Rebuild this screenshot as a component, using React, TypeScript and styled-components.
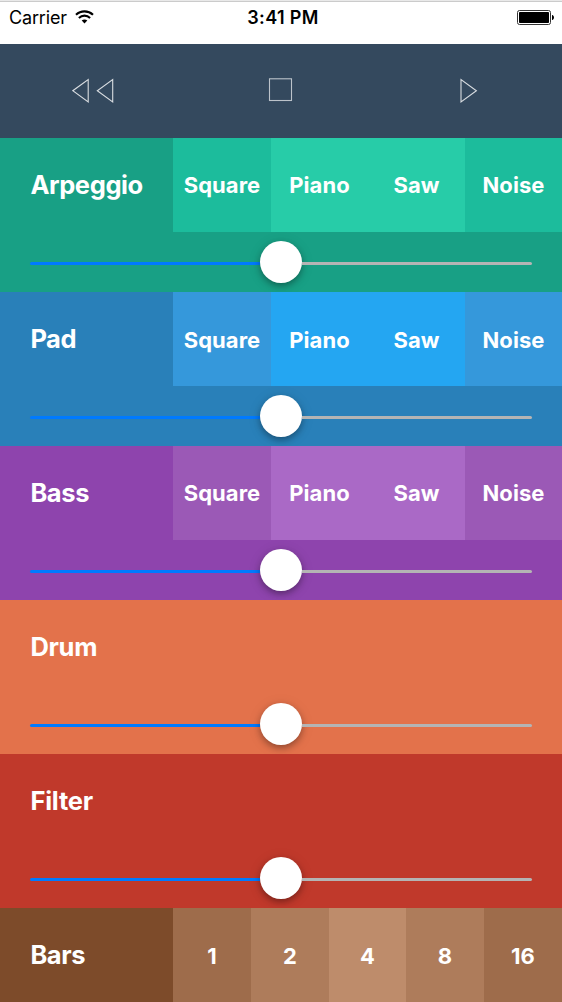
import React from 'react';
import styled, { createGlobalStyle } from 'styled-components';

const GlobalStyle = createGlobalStyle`
  * { box-sizing: border-box; }
  body { margin: 0; background: #fff; }
`;

const Screen = styled.main`
  display: flex;
  flex-direction: column;
  width: 562px;
  height: 1002px;
  overflow: hidden;
  font-family: Inter, 'Liberation Sans', sans-serif;
`;

const StatusBar = styled.header`
  display: grid;
  grid-template-columns: 1fr auto 1fr;
  flex: 0 0 44px;
  align-items: start;
  padding: 6px 8px 0 9px;
  border-top: 1px solid #e9e9e9;
  box-shadow: inset 0 1px 0 #cbcbcb;
  background: #fff;
  color: #000;
  line-height: 22px;
`;

const Carrier = styled.div`
  display: flex;
  align-items: flex-start;
  gap: 8px;
  font-size: 18px;
  letter-spacing: -0.15px;
  svg { margin-top: 3px; }
`;

const Clock = styled.time`
  margin-left: 3px;
  font-size: 18px;
  font-weight: 600;
  letter-spacing: 0.35px;
`;

const Battery = styled.div`
  display: flex;
  justify-content: flex-end;
  padding-top: 3px;
`;

const Transport = styled.nav`
  display: grid;
  grid-template-columns: repeat(3, 1fr);
  flex: 0 0 94px;
  background: #34495e;
`;

const TransportButton = styled.button`
  display: flex;
  align-items: center;
  justify-content: center;
  padding: 0;
  border: 0;
  background: none;
`;

const TrackPanel = styled.section<{ $bg: string }>`
  flex: 0 0 154px;
  background: ${(p) => p.$bg};
`;

const BarsPanel = styled.section`
  flex: 0 0 94px;
  background: #7d4b2a;
`;

const TrackHeader = styled.div`
  display: flex;
  height: 94px;
`;

const TrackName = styled.h2<{ $tracking: number }>`
  flex: 0 0 173px;
  margin: 0;
  padding-left: 30.4px;
  font-size: 25.5px;
  font-weight: 700;
  line-height: 94px;
  letter-spacing: ${(p) => p.$tracking}px;
  color: #fff;
`;

const Options = styled.div<{ $columns: string }>`
  flex: 1;
  display: grid;
  grid-template-columns: ${(p) => p.$columns};
`;

const Option = styled.button<{ $bg: string; $low?: boolean }>`
  padding: ${(p) => (p.$low ? 2 : 0)}px 0 0;
  border: 0;
  background: ${(p) => p.$bg};
  color: #fff;
  font: 700 22px/92px Inter, 'Liberation Sans', sans-serif;
  letter-spacing: 0.05px;
  text-align: center;
`;

const Slider = styled.div`
  display: flex;
  align-items: center;
  height: 60px;
  padding: 0 30px;
`;

const Rail = styled.div<{ $filled?: boolean }>`
  flex: 1;
  height: 3px;
  margin-top: 3px;
  border-radius: ${(p) => (p.$filled ? '2px 0 0 2px' : '0 2px 2px 0')};
  background: ${(p) => (p.$filled ? '#007aff' : '#b4b4b4')};
`;

const Knob = styled.div`
  flex: 0 0 42px;
  height: 42px;
  border-radius: 50%;
  background: #fff;
  box-shadow: 0 3px 6px rgba(0, 0, 0, 0.3), 0 2px 14px rgba(0, 0, 0, 0.1);
`;

const VOICES = ['Square', 'Piano', 'Saw', 'Noise'];

const TRACKS = [
  { name: 'Arpeggio', bg: '#18a085', off: '#1cbc9c', on: '#27cca8', low: false, tracking: -0.4 },
  { name: 'Pad', bg: '#2980b9', off: '#3598db', on: '#24a6f2', low: true, tracking: -0.5 },
  { name: 'Bass', bg: '#8e44ad', off: '#9b59b6', on: '#aa69c6', low: false, tracking: -0.4 },
  { name: 'Drum', bg: '#e3724b', tracking: -0.3 },
  { name: 'Filter', bg: '#c0392b', tracking: -0.2 },
];

const BARS = [
  { label: '1', bg: '#9e6c4b' },
  { label: '2', bg: '#ae7c5b' },
  { label: '4', bg: '#be8c6b' },
  { label: '8', bg: '#ae7c5b' },
  { label: '16', bg: '#9e6c4b' },
];

const WifiIcon = () => (
  <svg width="19" height="14" viewBox="0 0 19 14" fill="none" stroke="#000" strokeWidth="2.1">
    <path d="M1 4.8C5.8 .2 13.2 .2 18 4.8" />
    <path d="M3.9 7.9C7.1 4.9 11.9 4.9 15.1 7.9" />
    <path d="M9.5 13.4L6.7 10.6C8.3 9.2 10.7 9.2 12.3 10.6Z" fill="#000" stroke="none" />
  </svg>
);

const BatteryIcon = () => (
  <svg width="37" height="15" viewBox="0 0 37 15">
    <rect x="0.5" y="0.5" width="33" height="14" rx="2" fill="#fff" stroke="#333" />
    <rect x="2" y="2" width="30" height="11" rx="0.8" fill="#000" />
    <path d="M35 5h.5q1.5 .6 1.5 2.5t-1.5 2.5h-.5z" fill="#000" />
  </svg>
);

const RewindIcon = () => (
  <svg width="44" height="26" viewBox="0 0 44 26" fill="none" stroke="#d9dde1" strokeWidth="1.1">
    <path d="M16.2 1.6V23.9L0.8 12.7Z" />
    <path d="M40.7 1.6V23.9L25.3 12.7Z" />
  </svg>
);

const StopIcon = () => (
  <svg width="26" height="26" viewBox="0 0 26 26" fill="none" stroke="#bcc3ca" strokeWidth="1.1">
    <rect x="1.5" y="0.8" width="22" height="21.7" />
  </svg>
);

const PlayIcon = () => (
  <svg width="20" height="26" viewBox="0 0 20 26" fill="none" stroke="#d9dde1" strokeWidth="1.1">
    <path d="M3 1.6V23.9L18.4 12.7Z" />
  </svg>
);

export default function App() {
  return (
    <Screen>
      <GlobalStyle />
      <StatusBar>
        <Carrier>
          Carrier
          <WifiIcon />
        </Carrier>
        <Clock>3:41 PM</Clock>
        <Battery>
          <BatteryIcon />
        </Battery>
      </StatusBar>
      <Transport>
        <TransportButton aria-label="Rewind"><RewindIcon /></TransportButton>
        <TransportButton aria-label="Stop"><StopIcon /></TransportButton>
        <TransportButton aria-label="Play"><PlayIcon /></TransportButton>
      </Transport>
      {TRACKS.map((track) => (
        <TrackPanel key={track.name} $bg={track.bg}>
          <TrackHeader>
            <TrackName $tracking={track.tracking}>{track.name}</TrackName>
            {track.on && (
              <Options $columns="98px 97px 97px 97px">
                {VOICES.map((voice, i) => (
                  <Option key={voice} $low={track.low} $bg={i === 1 || i === 2 ? track.on : track.off}>
                    {voice}
                  </Option>
                ))}
              </Options>
            )}
          </TrackHeader>
          <Slider>
            <Rail $filled />
            <Knob />
            <Rail />
          </Slider>
        </TrackPanel>
      ))}
      <BarsPanel>
        <TrackHeader>
          <TrackName $tracking={-0.4}>Bars</TrackName>
          <Options $columns="78px 78px 77px 78px 78px">
            {BARS.map((bar) => (
              <Option key={bar.label} $low $bg={bar.bg}>{bar.label}</Option>
            ))}
          </Options>
        </TrackHeader>
      </BarsPanel>
    </Screen>
  );
}
